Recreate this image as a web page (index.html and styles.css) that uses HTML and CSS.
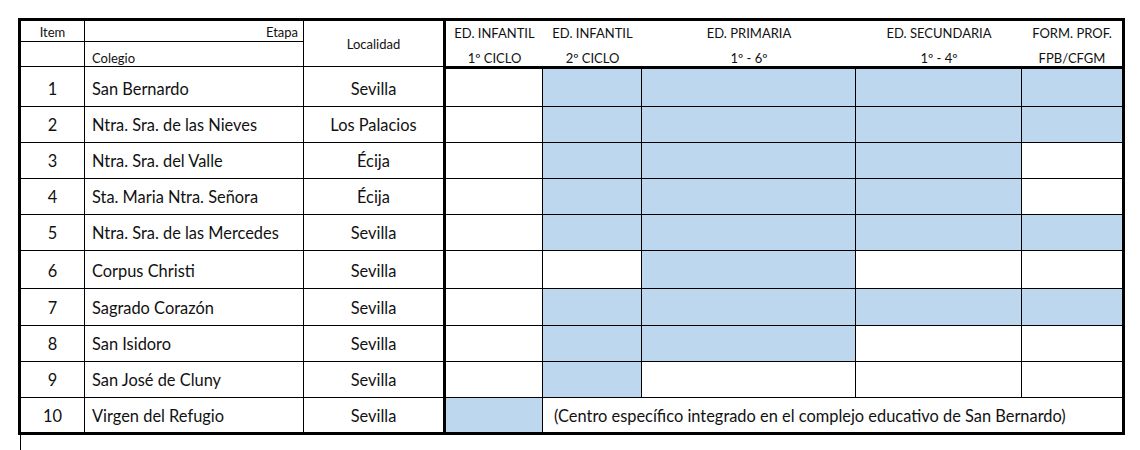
FILE: index.html
```html
<!DOCTYPE html>
<html lang="es">
<head>
<meta charset="utf-8">
<title>Colegios y etapas</title>
<link rel="stylesheet" href="styles.css">
</head>
<body>
<div class="sheet">
  <table class="grid">
    <colgroup>
      <col class="c-item">
      <col class="c-colegio">
      <col class="c-loc">
      <col class="c-inf1">
      <col class="c-inf2">
      <col class="c-prim">
      <col class="c-sec">
      <col class="c-fp">
    </colgroup>
    <thead>
      <tr class="h1">
        <td class="hd item-h">Item</td>
        <td class="hd etapa">Etapa</td>
        <td class="hd loc-h" rowspan="2">Localidad</td>
        <td class="hd stage">ED. INFANTIL</td>
        <td class="hd stage">ED. INFANTIL</td>
        <td class="hd stage">ED. PRIMARIA</td>
        <td class="hd stage">ED. SECUNDARIA</td>
        <td class="hd stage last">FORM. PROF.</td>
      </tr>
      <tr class="h2">
        <td class="hd"></td>
        <td class="hd colegio-h">Colegio</td>
        <td class="hd stage sub">1º CICLO</td>
        <td class="hd stage sub">2º CICLO</td>
        <td class="hd stage sub">1º - 6º</td>
        <td class="hd stage sub">1º - 4º</td>
        <td class="hd stage sub last">FPB/CFGM</td>
      </tr>
    </thead>
    <tbody>
      <tr class="r r1">
        <td class="num">1</td><td class="name">San Bernardo</td><td class="loc">Sevilla</td>
        <td class="st"></td><td class="st on"></td><td class="st on"></td><td class="st on"></td><td class="st on last"></td>
      </tr>
      <tr class="r">
        <td class="num">2</td><td class="name">Ntra. Sra. de las Nieves</td><td class="loc">Los Palacios</td>
        <td class="st"></td><td class="st on"></td><td class="st on"></td><td class="st on"></td><td class="st on last"></td>
      </tr>
      <tr class="r">
        <td class="num">3</td><td class="name">Ntra. Sra. del Valle</td><td class="loc">Écija</td>
        <td class="st"></td><td class="st on"></td><td class="st on"></td><td class="st on"></td><td class="st last"></td>
      </tr>
      <tr class="r">
        <td class="num">4</td><td class="name">Sta. Maria Ntra. Señora</td><td class="loc">Écija</td>
        <td class="st"></td><td class="st on"></td><td class="st on"></td><td class="st on"></td><td class="st last"></td>
      </tr>
      <tr class="r">
        <td class="num">5</td><td class="name">Ntra. Sra. de las Mercedes</td><td class="loc">Sevilla</td>
        <td class="st"></td><td class="st on"></td><td class="st on"></td><td class="st on"></td><td class="st on last"></td>
      </tr>
      <tr class="r r6">
        <td class="num">6</td><td class="name">Corpus Christi</td><td class="loc">Sevilla</td>
        <td class="st"></td><td class="st"></td><td class="st on"></td><td class="st"></td><td class="st last"></td>
      </tr>
      <tr class="r r7">
        <td class="num">7</td><td class="name">Sagrado Corazón</td><td class="loc">Sevilla</td>
        <td class="st"></td><td class="st on"></td><td class="st on"></td><td class="st on"></td><td class="st on last"></td>
      </tr>
      <tr class="r">
        <td class="num">8</td><td class="name">San Isidoro</td><td class="loc">Sevilla</td>
        <td class="st"></td><td class="st on"></td><td class="st on"></td><td class="st"></td><td class="st last"></td>
      </tr>
      <tr class="r">
        <td class="num">9</td><td class="name">San José de Cluny</td><td class="loc">Sevilla</td>
        <td class="st"></td><td class="st on"></td><td class="st"></td><td class="st"></td><td class="st last"></td>
      </tr>
      <tr class="r r10">
        <td class="num">10</td><td class="name">Virgen del Refugio</td><td class="loc">Sevilla</td>
        <td class="st on"></td>
        <td class="st note last" colspan="4">(Centro específico integrado en el complejo educativo de San Bernardo)</td>
      </tr>
    </tbody>
  </table>
  <div class="tail"></div>
</div>
</body>
</html>
```

FILE: styles.css
```css
html, body {
  margin: 0;
  padding: 0;
  background: #ffffff;
}

body {
  font-family: Lato, "Open Sans", "Liberation Sans", sans-serif;
  color: #111111;
}

.sheet {
  padding: 18px 0 0 18px;
}

.grid {
  table-layout: fixed;
  border-collapse: separate;
  border-spacing: 0;
  width: 1107px;
  border: 3px solid #000000;
}

.c-item { width: 64px; }
.c-colegio { width: 219px; }
.c-loc { width: 142px; }
.c-inf1 { width: 97px; }
.c-inf2 { width: 99px; }
.c-prim { width: 214px; }
.c-sec { width: 166px; }
.c-fp { width: 100px; }

.grid td {
  box-sizing: border-box;
  padding: 0;
  border-right: 1px solid #000000;
  border-bottom: 1px solid #000000;
  white-space: nowrap;
  overflow: hidden;
}

.grid td.last {
  border-right: none;
}

/* header */
.hd {
  font-size: 13px;
  line-height: 14px;
  text-align: center;
  vertical-align: bottom;
}

.h1 .hd {
  height: 21px;
  padding-bottom: 2px;
}

.h2 .hd {
  height: 25px;
  padding-bottom: 1px;
}

.grid .h1 .stage {
  border-bottom: none;
}

.grid .stage {
  border-right: none;
}

.grid .hd.etapa {
  text-align: right;
  padding-right: 5px;
}

.grid .hd.colegio-h {
  text-align: left;
  padding-left: 7px;
}

.grid .hd.loc-h {
  vertical-align: middle;
  padding-bottom: 0;
  border-right: 3px solid #000000;
}

/* body rows */
.r td {
  height: 36px;
  font-size: 16.4px;
  line-height: 19px;
  vertical-align: bottom;
  padding-bottom: 8px;
}

.grid .r1 td {
  height: 40px;
}

.grid .r1 .st {
  border-top: 2px solid #000000;
}

.grid .r6 td {
  height: 38px;
}

.grid .r7 td {
  height: 37px;
}

.grid .r10 td {
  height: 34px;
  border-bottom: none;
  padding-bottom: 7px;
}

.num {
  text-align: center;
}

.name {
  text-align: left;
  padding-left: 7px !important;
}

.grid .loc {
  text-align: center;
  border-right: 3px solid #000000;
}

.st.on {
  background: #bdd7ee;
}

.note {
  text-align: left;
  padding-left: 11px !important;
}

.tail {
  width: 1px;
  height: 16px;
  margin-left: 2px;
  background: #000000;
}
```
